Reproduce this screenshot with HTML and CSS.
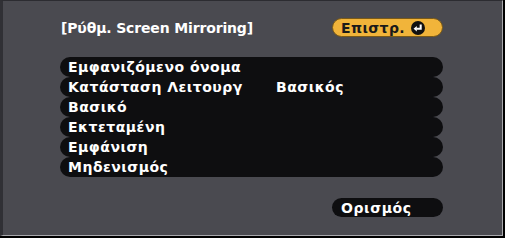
FILE: index.html
```html
<!DOCTYPE html>
<html lang="el">
<head>
    <meta charset="UTF-8">
    <meta name="viewport" content="width=device-width, initial-scale=1.0">
    <title>Ρύθμ. Screen Mirroring</title>
    <link rel="stylesheet" href="styles.css">
</head>
<body>
    <div class="screen">
        <div class="panel">
            <div class="header">
                <h1>[Ρύθμ. Screen Mirroring]</h1>
                <button class="btn-return">
                    <span>Επιστρ.</span>
                    <svg class="enter-icon" width="14" height="14" viewBox="0 0 13 13">
                        <circle cx="6.5" cy="6.5" r="6.5" fill="#111"/>
                        <path d="M9 3.2 V7.2 H5" stroke="#fff" stroke-width="1.9" fill="none"/>
                        <path d="M2.4 7.2 L5.4 4.7 V9.7 Z" fill="#fff"/>
                    </svg>
                </button>
            </div>

            <div class="menu">
                <div class="menu-row"><span class="label">Εμφανιζόμενο όνομα</span></div>
                <div class="menu-row"><span class="label">Κατάσταση Λειτουργ</span><span class="value">Βασικός</span></div>
                <div class="menu-row"><span class="label">Βασικό</span></div>
                <div class="menu-row"><span class="label">Εκτεταμένη</span></div>
                <div class="menu-row"><span class="label">Εμφάνιση</span></div>
                <div class="menu-row"><span class="label">Μηδενισμός</span></div>
            </div>

            <div class="footer">
                <button class="btn-set">Ορισμός</button>
            </div>
        </div>
    </div>
</body>
</html>
```

FILE: styles.css
```css
* {
    margin: 0;
    padding: 0;
    box-sizing: border-box;
}

body {
    background: #fff;
    font-family: 'DejaVu Sans', Verdana, sans-serif;
    font-size: 14px;
    font-weight: bold;
    color: #fff;
}

.screen {
    width: 505px;
    height: 238px;
    border-right: 2px solid #000;
    border-bottom: 2px solid #000;
}

.panel {
    height: 100%;
    background: #4a4a50;
    border-top: 1px solid #2c2c31;
    border-left: 3px solid #303035;
    border-right: 1px solid #a8a8ac;
    border-bottom: 1px solid #a8a8ac;
    padding: 17px 59px 0 57px;
}

.header {
    display: flex;
    justify-content: space-between;
    align-items: center;
    height: 19px;
}

h1 {
    font-size: 14px;
    font-weight: bold;
    padding-left: 1px;
    letter-spacing: -0.15px;
}

button {
    font-family: inherit;
    font-size: 14px;
    font-weight: bold;
    border: none;
    cursor: pointer;
    letter-spacing: 0.6px;
}

.btn-return {
    display: flex;
    align-items: center;
    justify-content: space-between;
    width: 111px;
    height: 19px;
    padding: 0 17px 0 8px;
    background: #f1b43a;
    border: 1px solid #7a5a18;
    border-radius: 10px;
    color: #1a1a1a;
    letter-spacing: 0.4px;
}

.enter-icon {
    display: block;
}

.menu {
    margin-top: 20px;
    display: flex;
    flex-direction: column;
    letter-spacing: 0.5px;
}

.menu-row {
    display: flex;
    align-items: center;
    height: 20px;
    padding-left: 8px;
    background: #0e0e10;
    border-radius: 10px;
}

.label {
    width: 208px;
}

.footer {
    display: flex;
    justify-content: flex-end;
    margin-top: 21px;
}

.btn-set {
    width: 111px;
    height: 19px;
    padding-left: 9px;
    text-align: left;
    background: #0e0e10;
    border-radius: 10px;
    color: #fff;
}
```
